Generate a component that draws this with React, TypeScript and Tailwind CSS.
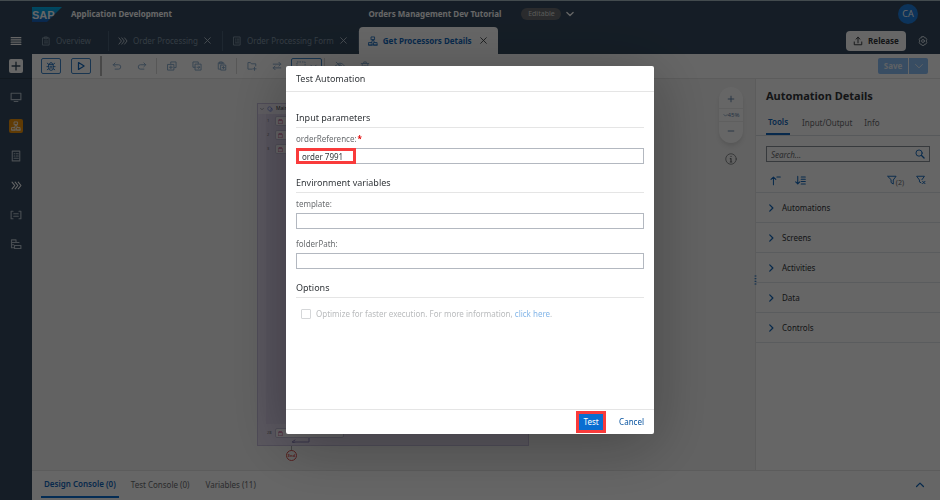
import type { ReactNode } from "react";

type IconProps = { children: ReactNode; className?: string; box?: string };

function Icon({ children, className = "size-[10px]", box = "0 0 16 16" }: IconProps) {
  return (
    <svg
      viewBox={box}
      className={`shrink-0 ${className}`}
      fill="none"
      stroke="currentColor"
      strokeWidth="1.5"
      strokeLinecap="round"
      strokeLinejoin="round"
      aria-hidden="true"
    >
      {children}
    </svg>
  );
}

const Close = () => (
  <Icon className="size-[9px]">
    <path d="M3 3l10 10M13 3L3 13" />
  </Icon>
);
const ChevronsIcon = ({ className }: { className?: string }) => (
  <Icon className={className}>
    <path d="M1.500 3l4 5-4 5M6 3l4 5-4 5M10.500 3l4 5-4 5" />
  </Icon>
);
const FormIcon = ({ className }: { className?: string }) => (
  <Icon className={className}>
    <path d="M3 1.500h10v13H3zM5.500 5h1M8.500 5h2.500M5.500 8h1M8.500 8h2.500M5.500 11h5.500" />
  </Icon>
);
const ClipboardIcon = () => (
  <Icon>
    <path d="M3 3h10v11.500H3zM6 1.500h4v3H6zM5.500 8h5M5.500 11h5" />
  </Icon>
);
const FlowIcon = ({ className }: { className?: string }) => (
  <Icon className={className}>
    <path
      d="M5.500 1.500h5v4.500h-5zM7 6v2.500L4.500 10.500M9 6v2.500l2.500 2M1.500 10.500h5V14.500h-5zM9.500 10.500h5V14.500h-5zM1 14.500h14"
      strokeWidth="1.300"
    />
  </Icon>
);

function SapLogo() {
  return (
    <svg viewBox="0 0 60 30" className="h-[15px] w-[30px] shrink-0" role="img" aria-label="SAP">
      <defs>
        <linearGradient id="sap" x1="0" y1="0" x2="0" y2="1">
          <stop offset="0" stopColor="#00b8f1" />
          <stop offset="0.5" stopColor="#0d90d9" />
          <stop offset="1" stopColor="#1a5fbe" />
        </linearGradient>
      </defs>
      <path d="M0 0h60L30 30H0z" fill="url(#sap)" />
      <text x="0" y="23" fill="#fff" fontSize="22" fontWeight="700" fontFamily="Liberation Sans, sans-serif">
        SAP
      </text>
    </svg>
  );
}

function Header() {
  return (
    <header className="grid h-[27px] shrink-0 grid-cols-[1fr_auto_1fr] items-center border-t border-[#a9bcc4] bg-[#354a5f] pl-1 text-[8px] text-white">
      <div className="flex items-center gap-[9px] pl-7">
        <SapLogo />
        <span className="font-bold">Application Development</span>
      </div>
      <div className="flex items-center">
        <h1 className="font-bold">Orders Management Dev Tutorial</h1>
        <span className="ml-5 flex h-3 w-10 items-center justify-center rounded-full bg-[#6a6d70] text-[7px] text-[#dddddd]">
          Editable
        </span>
        <button aria-label="Project versions" className="ml-1">
          <Icon>
            <path d="M3 5.500l5 5 5-5" strokeWidth="2" />
          </Icon>
        </button>
      </div>
      <button className="mr-[22px] size-5 justify-self-end rounded-full bg-[#1f7fe0] text-[9px]">CA</button>
    </header>
  );
}

function Tab({ icon, label }: { icon: ReactNode; label: string }) {
  return (
    <div className="flex h-5 items-center border-r border-[#4d6278] pr-[10px] pl-[9px] text-[#8396a8]">
      <button className="flex items-center gap-[5px]">
        {icon}
        {label}
      </button>
      <button aria-label={`Close ${label}`} className="ml-[5px] text-[#c0ccd8]">
        <Close />
      </button>
    </div>
  );
}

function TabBar() {
  return (
    <nav className="flex h-[27px] shrink-0 items-center bg-[#354a5f] text-[8px]">
      <button aria-label="Menu" className="flex w-8 justify-center text-white">
        <Icon className="size-3">
          <path d="M1.500 3.500h13M1.500 6.500h13M1.500 9.500h13M1.500 12.500h13" />
        </Icon>
      </button>
      <div className="flex h-full items-center">
        <div className="flex h-5 w-[77px] items-center border-r border-[#4d6278] pl-[9px] text-[#8396a8]">
          <button className="flex items-center gap-[5px]">
            <ClipboardIcon />
            Overview
          </button>
        </div>
        <Tab icon={<ChevronsIcon className="size-[10px] text-[#c0ccd8]" />} label="Order Processing" />
        <Tab icon={<FormIcon />} label="Order Processing Form" />
        <div className="flex h-full items-center rounded-t-sm bg-white pr-[10px] pl-[9px] font-bold text-[#1268bd]">
          <button className="flex items-center gap-[5px]">
            <FlowIcon />
            Get Processors Details
          </button>
          <button aria-label="Close Get Processors Details" className="ml-[7px] text-[#32363a]">
            <Close />
          </button>
        </div>
      </div>
      <button className="ml-auto flex h-5 w-[60px] items-center justify-center gap-[5px] rounded-sm bg-white font-bold text-[#32363a]">
        <Icon>
          <path d="M2 9.500V14h12V9.500M8 11V2M4.800 5L8 2l3.200 3" />
        </Icon>
        Release
      </button>
      <button aria-label="Settings" className="mr-3 ml-3 text-[#d1dbe4]">
        <Icon className="size-[10px]">
          <circle cx="8" cy="8" r="2.300" />
          <path d="M6.300 1h3.400l.8 1.800 1.900.1 1.700 2.800-1 2.300 1 2.300-1.700 2.800-1.900.1-.8 1.800H6.300l-.8-1.800-1.900-.1-1.700-2.800 1-2.300-1-2.300 1.700-2.800 1.900-.1z" />
        </Icon>
      </button>
    </nav>
  );
}

function SideBar() {
  return (
    <aside className="flex w-8 shrink-0 flex-col items-center bg-[#354a5f] text-[#b5c0cc]">
      <div className="flex h-[25px] w-full items-center justify-center border-b border-[#2b3c4e]">
        <button aria-label="Create" className="rounded-xs bg-white text-[#354a5f]">
          <Icon className="size-[14px]">
            <path d="M8 3.500v9M3.500 8h9" />
          </Icon>
        </button>
      </div>
      <div className="mt-[11px] flex h-[161px] flex-col items-center justify-between">
        <button aria-label="Applications" className="flex h-[14px] items-center">
          <Icon className="size-3">
            <path d="M1.500 3h13v8.500h-13zM5.500 14h5" />
          </Icon>
        </button>
        <button aria-label="Automations" className="flex size-[14px] items-center justify-center rounded-xs bg-[#f0940c] text-white">
          <FlowIcon />
        </button>
        <button aria-label="Forms" className="flex h-[14px] items-center">
          <FormIcon className="size-3" />
        </button>
        <button aria-label="Processes" className="flex h-[14px] items-center text-white">
          <ChevronsIcon className="size-[11px]" />
        </button>
        <button aria-label="Environment variables" className="flex h-[14px] items-center">
          <Icon className="size-3">
            <path d="M4 3H1.500v10H4M12 3h2.500v10H12M5 6.300h6M5 9.700h6" />
          </Icon>
        </button>
        <button aria-label="Data types" className="flex h-[14px] items-center">
          <Icon className="size-3">
            <path d="M2 2.500h6v3.500H2zM2 6v7h4M6 10h8.500v4H6zM2 9h3M8.500 6H12" />
          </Icon>
        </button>
      </div>
    </aside>
  );
}

function Tool({ label, children }: { label: string; children: ReactNode }) {
  return (
    <button aria-label={label} className="flex w-[25px] justify-center">
      <Icon className="size-[10px]">{children}</Icon>
    </button>
  );
}

const Separator = () => <span className="mx-[2px] h-4 w-px bg-[#d9d9d9]" />;

function ToolBar() {
  return (
    <div className="flex h-[25px] shrink-0 items-center border-b border-[#e5e5e5] bg-white pr-3 pl-[9px] text-[#86a9cb]">
      <button aria-label="Debug" className="flex h-4 w-5 items-center justify-center rounded-xs border border-[#3f86c9] text-[#1268bd]">
        <Icon>
          <path
            d="M4.500 5.500h7v6a3.500 3.500 0 01-7 0zM5.500 5a2.500 2.500 0 015 0M1.500 9h3M11.500 9h3M2 3.500l2.500 2M14 3.500l-2.500 2M2 14l2.700-2M14 14l-2.700-2M7 8.500h2M7 11h2"
            strokeWidth="1.300"
          />
        </Icon>
      </button>
      <button aria-label="Test" className="ml-[10px] flex h-4 w-5 items-center justify-center rounded-xs border border-[#3f86c9] text-[#1268bd]">
        <Icon>
          <path d="M4 2.500l9 5.500-9 5.500z" strokeWidth="2" />
        </Icon>
      </button>
      <span className="mr-[2px] ml-[9px] h-5 w-[2px] bg-[#b5b5b5]" />
      <Tool label="Undo">
        <path d="M5 3L2 6l3 3M2 6h8.500a3.500 3.500 0 010 7H5" />
      </Tool>
      <Tool label="Redo">
        <path d="M11 3l3 3-3 3M14 6H5.500a3.500 3.500 0 000 7H11" />
      </Tool>
      <Separator />
      <Tool label="Duplicate">
        <path d="M6 4V1.500h8.500v9H12M1.500 5.500H11v9H1.500zM6.200 7.800v4.500M4 10h4.500" />
      </Tool>
      <Tool label="Copy">
        <path d="M5 10H1.500V1.500H10V4M5.500 5h9v9.500h-9zM8 10h4M10.500 8l2 2-2 2" />
      </Tool>
      <Tool label="Paste">
        <path d="M5 13H2V3h9v2M4.500 1.500h4v3h-4zM6.500 6.500h7.500v8H6.500zM8.500 10.500h3.500M10.200 8.700v3.600" />
      </Tool>
      <Separator />
      <Tool label="Add folder">
        <path d="M8 13H1.500V2.500h4L7 4.500h7V8M12 10v5M9.500 12.500h5" />
      </Tool>
      <Tool label="Swap">
        <path d="M2 5h12M11 2l3 3-3 3M14 11H2M5 8l-3 3 3 3" />
      </Tool>
      <button aria-label="Selection mode" className="ml-[2px] flex h-4 w-[31px] items-center justify-center gap-1 rounded-xs border border-[#3f86c9]">
        <Icon className="size-[10px]">
          <path d="M1.500 1.500h13v13h-13z" strokeDasharray="2.500 1.500" strokeLinecap="butt" />
        </Icon>
        <Icon className="size-[7px]">
          <path d="M2 5l6 6 6-6" strokeWidth="2" />
        </Icon>
      </button>
      <Separator />
      <Tool label="Hide">
        <path d="M1 8c4-6 10-6 14 0-4 6-10 6-14 0zM2 2l12 12" />
        <circle cx="8" cy="8" r="2" />
      </Tool>
      <Tool label="Delete">
        <path d="M2 4h12M6 4V1.500h4V4M3.500 4v10.500h9V4M6.500 7v5M9.500 7v5" />
      </Tool>
      <div className="ml-auto flex gap-px text-[8px] font-bold text-[#eef5fb]">
        <button className="h-4 w-[30px] rounded-l-xs bg-[#8cc0f8]">Save</button>
        <button aria-label="Save options" className="flex h-4 w-[19px] items-center justify-center rounded-r-xs bg-[#8cc0f8]">
          <Icon>
            <path d="M2.500 5.500L8 11l5.500-5.500" />
          </Icon>
        </button>
      </div>
    </div>
  );
}

function Step({ index, className, wide = false }: { index: string; className: string; wide?: boolean }) {
  return (
    <div className={`absolute flex items-center ${className}`}>
      <span className="w-2 text-[4px] text-[#6a6d70]">{index}</span>
      <div className={`flex h-[10px] items-center rounded-xs border border-[#c3bed8] bg-[#f6f3fa] pl-[2px] text-[#c0407c] ${wide ? "w-[69px]" : "w-[60px]"}`}>
        <Icon className="size-[5px]">
          <path d="M2 4h12v11H2zM5 1h6v3H5z" />
        </Icon>
      </div>
    </div>
  );
}

function Canvas() {
  return (
    <section aria-label="Automation flow" className="relative min-w-0 flex-1 bg-[#f5f5f5]">
      <div className="absolute top-6 left-[225px] h-[343px] w-[272px] border border-[#c6bedb] bg-[#e2daee]">
        <div className="flex h-[10px] items-center gap-[3px] bg-[#eeeaf5] pl-[2px] text-[5px] text-[#32363a]">
          <Icon className="size-[4px]">
            <path d="M2 5l6 6 6-6" />
          </Icon>
          <Icon className="size-[6px] text-[#5c74d8]">
            <circle cx="7" cy="7" r="5" />
            <path d="M15 8a7 7 0 01-7 7" />
          </Icon>
          Main
        </div>
        <div className="absolute top-[10px] left-2 h-[310px] w-[240px] bg-[#d9d0e9]" />
        <Step index="1" className="top-[12px] left-[9px]" />
        <Step index="2" className="top-[26px] left-[9px]" />
        <Step index="3" className="top-[40px] left-[9px]" />
        <Step index="28" className="top-[324px] left-[9px]" wide />
        <Icon className="absolute top-[334px] left-[33px] h-[5px] w-[19px] text-[#8c83b8]" box="0 0 19 5">
          <path d="M18 0v4H2M4 2L1 4l3 1" strokeWidth="1" />
        </Icon>
      </div>
      <div className="absolute top-[367px] left-[259px] h-[5px] w-px bg-[#a9a9a9]" />
      <div className="absolute top-[371px] left-[254px] flex size-[11px] items-center justify-center rounded-full border border-[#d6504e] text-[4px] font-bold text-[#d6504e]">
        End
      </div>
      <div className="absolute top-2 right-3 flex h-14 w-6 flex-col items-center justify-between rounded-full bg-white py-[7px] text-[6px] text-[#5f83ab] shadow-md">
        <button aria-label="Zoom in">
          <Icon>
            <path d="M8 3.500v9M3.500 8h9" />
          </Icon>
        </button>
        <button className="flex h-[14px] w-full items-center justify-center border-y border-[#ededed]">
          <Icon className="size-[5px]">
            <path d="M3 5l5 5 5-5" strokeWidth="2" />
          </Icon>
          45%
        </button>
        <button aria-label="Zoom out">
          <Icon>
            <path d="M3.500 8h9" />
          </Icon>
        </button>
      </div>
      <button aria-label="Information" className="absolute top-[74px] right-[18px] text-[#6a6d70]">
        <Icon className="size-3">
          <circle cx="8" cy="8" r="7" strokeWidth="1" />
          <path d="M8 7.500V12M8 4.300v.4M7 7.500h1M7 12h2" />
        </Icon>
      </button>
      <Icon className="absolute top-1/2 -right-1 h-[10px] w-[6px] text-[#1268bd]" box="0 0 6 10">
        <path d="M2 1h1M2 3.700h1M2 6.300h1M2 9h1" strokeWidth="1" />
      </Icon>
    </section>
  );
}

function DetailsPanel() {
  const groups = ["Automations", "Screens", "Activities", "Data", "Controls"];
  return (
    <aside className="w-[185px] shrink-0 border-l border-[#e5e5e5] bg-white text-[8px] text-[#32363a]">
      <h2 className="px-[10px] pt-[9px] text-[11px] leading-4 font-bold">Automation Details</h2>
      <div className="mt-[7px] flex h-[25px] gap-3 border-b border-[#d9dfe4] px-[10px] text-[#6a6d70]">
        <button className="border-b-2 border-[#1268bd] px-[2px] font-semibold text-[#1268bd]">Tools</button>
        <button>Input/Output</button>
        <button>Info</button>
      </div>
      <div className="mx-[10px] mt-[10px] flex h-4 items-center border border-[#89919a] pr-1 text-[#1268bd]">
        <input
          aria-label="Search tools"
          placeholder="Search..."
          className="h-full min-w-0 flex-1 px-1 italic outline-none placeholder:text-[#6a6d70]"
        />
        <Icon>
          <circle cx="6.500" cy="6.500" r="5" />
          <path d="M10.500 10.500l4 4" strokeWidth="2" />
        </Icon>
      </div>
      <div className="flex h-[31px] items-center border-b border-[#e1e6ea] px-[14px] pt-[6px] text-[#1268bd]">
        <button aria-label="Collapse all">
          <Icon className="size-[11px]">
            <path d="M5 14V3M1.500 6.500L5 3l3.500 3.500M10 3h5" />
          </Icon>
        </button>
        <button aria-label="Expand all" className="ml-[14px]">
          <Icon className="size-[11px]">
            <path d="M4 2v11M1 10l3 3 3-3M9 3h6M9 6.300h6M9 9.600h6M9 13h6" />
          </Icon>
        </button>
        <button aria-label="Filters" className="ml-auto flex items-center text-[7px] text-[#6a6d70]">
          <Icon className="size-[10px] text-[#1268bd]">
            <path d="M1.500 2h13L10 8v6.500L6.500 12V8z" />
          </Icon>
          <span className="-ml-px pt-[6px] leading-[10px]">(2)</span>
        </button>
        <button aria-label="Clear filters" className="ml-3">
          <Icon>
            <path d="M8 12.500L5.500 11V8L1 2h12.500L9.500 7.500M10.500 10l4 4M14.500 10l-4 4" />
          </Icon>
        </button>
      </div>
      <ul>
        {groups.map((group) => (
          <li key={group} className="h-[30px] border-b border-[#e1e6ea]">
            <button className="flex h-full w-full items-center gap-[6px] pl-[10px]">
              <Icon className="size-[10px] text-[#1268bd]">
                <path d="M6 3l5 5-5 5" strokeWidth="2" />
              </Icon>
              {group}
            </button>
          </li>
        ))}
      </ul>
    </aside>
  );
}

function ConsoleBar() {
  return (
    <footer className="flex h-[30px] shrink-0 items-stretch border-t border-[#e5e5e5] bg-white px-[9px] pb-[2px] text-[8px] text-[#6a6d70]">
      <button className="border-b-2 border-[#0a6ed1] px-[3px] font-semibold text-[#1268bd]">Design Console (0)</button>
      <button className="ml-3">Test Console (0)</button>
      <button className="ml-4">Variables (11)</button>
      <button aria-label="Expand console" className="mr-[6px] ml-auto text-[#1268bd]">
        <Icon>
          <path d="M2.500 10.500L8 5l5.500 5.500" strokeWidth="2" />
        </Icon>
      </button>
    </footer>
  );
}

function SectionTitle({ children }: { children: ReactNode }) {
  return <h3 className="h-[21px] border-b border-[#e5e5e5] text-[9px] leading-[21px]">{children}</h3>;
}

type FieldProps = { id: string; value?: string; required?: boolean; marked?: boolean };

function Field({ id, value = "", required = false, marked = false }: FieldProps) {
  return (
    <div>
      <label htmlFor={id} className="block h-3 leading-[13px] text-[#6a6d70]">
        {id}:{required && <span className="ml-px font-bold text-[#e00000]">*</span>}
      </label>
      <div className="relative mt-1">
        <input
          id={id}
          defaultValue={value}
          required={required}
          className="block h-4 w-full border border-[#b3b8c0] px-[5px] text-[#32363a] outline-none"
        />
        {marked && <span className="pointer-events-none absolute inset-y-0 left-0 w-[60px] border-3 border-[#f93b3b]" />}
      </div>
    </div>
  );
}

function TestDialog() {
  return (
    <div className="fixed inset-0 flex items-center justify-center bg-black/60">
      <div
        role="dialog"
        aria-modal="true"
        aria-labelledby="dialog-title"
        className="flex h-[368px] w-[368px] flex-col rounded-xs bg-white text-[8px] text-[#32363a] shadow-[0_10px_60px_rgba(0,0,0,0.3)]"
      >
        <h2 id="dialog-title" className="h-[26px] border-b border-[#e5e5e5] px-[10px] text-[9px] leading-[26px]">
          Test Automation
        </h2>
        <div className="flex-1 space-y-2 px-[10px] pt-[15px]">
          <section className="space-y-1">
            <SectionTitle>Input parameters</SectionTitle>
            <Field id="orderReference" value="order 7991" required marked />
          </section>
          <section>
            <SectionTitle>Environment variables</SectionTitle>
            <div className="space-y-2 pt-1">
              <Field id="template" />
              <Field id="folderPath" />
            </div>
          </section>
          <section>
            <SectionTitle>Options</SectionTitle>
            <div className="flex items-center gap-[5px] pt-[10px] pl-[5px] leading-3 text-[#b9bbbd]">
              <input id="optimize" type="checkbox" disabled className="size-[10px] appearance-none rounded-[1px] border border-[#d5d7d9]" />
              <label htmlFor="optimize">
                Optimize for faster execution. For more information,{" "}
                <a href="#optimize" className="text-[#84b6e8]">
                  click here
                </a>
                .
              </label>
            </div>
          </section>
        </div>
        <div className="flex h-[25px] items-center justify-end gap-4 border-t border-[#e5e5e5] pr-[10px]">
          <div className="relative">
            <button className="block h-4 w-6 bg-[#0a6ed1] text-white">Test</button>
            <span className="pointer-events-none absolute -inset-[3px] border-3 border-[#f93b3b]" />
          </div>
          <button className="text-[#0854a0]">Cancel</button>
        </div>
      </div>
    </div>
  );
}

export default function App() {
  return (
    <div className="flex h-screen flex-col overflow-hidden font-['Noto_Sans',sans-serif]">
      <Header />
      <TabBar />
      <div className="flex min-h-0 flex-1">
        <SideBar />
        <div className="flex min-w-0 flex-1 flex-col">
          <ToolBar />
          <div className="flex min-h-0 flex-1">
            <Canvas />
            <DetailsPanel />
          </div>
          <ConsoleBar />
        </div>
      </div>
      <TestDialog />
    </div>
  );
}
